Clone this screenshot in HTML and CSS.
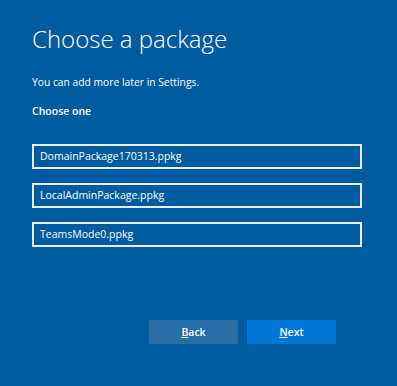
FILE: index.html
```html
<!DOCTYPE html>
<html lang="en">
<head>
    <meta charset="UTF-8">
    <title>Choose a package</title>
    <link rel="stylesheet" href="styles.css">
</head>
<body>
    <div class="page">
        <h1 class="title">Choose a package</h1>
        <p class="hint">You can add more later in Settings.</p>
        <p class="label">Choose one</p>

        <div class="packages">
            <div class="package">DomainPackage170313.ppkg</div>
            <div class="package">LocalAdminPackage.ppkg</div>
            <div class="package">TeamsMode0.ppkg</div>
        </div>

        <div class="actions">
            <button class="btn back"><u>B</u>ack</button>
            <button class="btn next"><u>N</u>ext</button>
        </div>
    </div>
</body>
</html>
```

FILE: styles.css
```css
html, body {
    margin: 0;
    height: 100%;
}

body {
    background-color: #005a9e;
    color: white;
    font-family: "Open Sans", "Noto Sans", Arial, sans-serif;
}

.page {
    padding: 19px 35px 0 32px;
}

.title {
    margin: 0;
    font-size: 24px;
    font-weight: 300;
    line-height: 40px;
}

.hint {
    margin: 16px 0 0;
    font-size: 10.3px;
    line-height: 14px;
}

.label {
    margin: 15px 0 0;
    font-size: 10.5px;
    font-weight: 600;
    line-height: 14px;
}

.packages {
    display: flex;
    flex-direction: column;
    gap: 14px;
    margin-top: 26px;
}

.package {
    height: 21px;
    line-height: 21px;
    padding: 0 6px;
    border: 2px solid #e8eef4;
    font-size: 10.5px;
}

.actions {
    display: flex;
    justify-content: flex-end;
    gap: 9px;
    margin-top: 73px;
    padding-right: 26px;
}

.btn {
    width: 89px;
    height: 24px;
    border: none;
    color: white;
    font-family: inherit;
    font-size: 10.5px;
    font-weight: 600;
    padding: 0;
}

.back {
    background-color: #2a6ea6;
}

.next {
    background-color: #0078d7;
}
```
